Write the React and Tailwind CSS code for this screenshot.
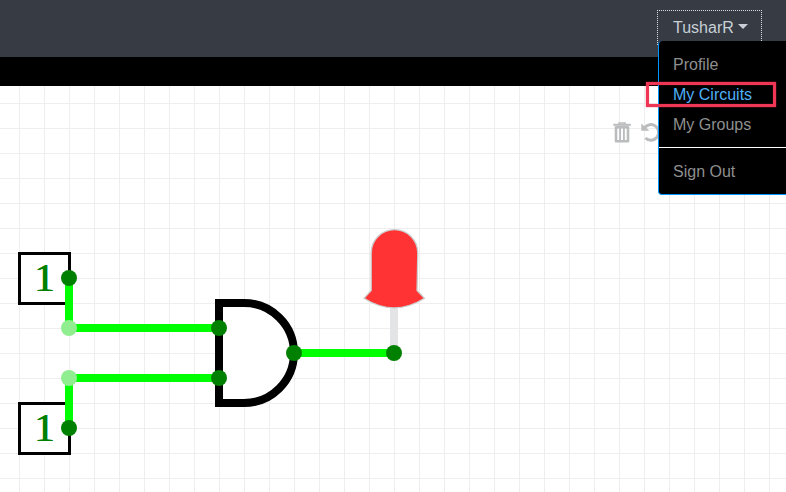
function InputBox({ y }) {
  return (
    <g>
      <rect x="19.5" y={y} width="50" height="50" fill="#fff" stroke="#000" strokeWidth="3" />
      <g fill="#008000" textAnchor="middle" className="font-['Liberation_Serif',serif] text-[41px]">
        <text x="44" y={y + 37.5}>
          1
        </text>
        <text x="45" y={y + 37.5} aria-hidden="true">
          1
        </text>
      </g>
    </g>
  );
}

function TrashIcon() {
  return (
    <svg className="h-[22px] w-[19px]" viewBox="0 0 19 22" fill="none" stroke="currentColor">
      <path d="M.3 2.800H17.800" strokeWidth="2" />
      <path d="M6 2V.9H12V2" strokeWidth="1.500" />
      <path d="M3 5.200V19.200H15V5.200Z" strokeWidth="2.600" strokeLinejoin="round" />
      <path d="M7.100 6V19M10.900 6V19" strokeWidth="1.900" />
    </svg>
  );
}

function UndoIcon() {
  return (
    <svg className="size-[21px]" viewBox="0 0 21 21" fill="none" stroke="currentColor">
      <path d="M3.300 6.200A7.800 7.800 0 1 1 4.400 16" strokeWidth="3" />
      <path d="M.3 1.500V8.700H8.500Z" fill="currentColor" stroke="none" />
    </svg>
  );
}

function Circuit() {
  return (
    <svg className="block h-[406px] w-full" viewBox="0 86 786 406">
      <defs>
        <pattern id="grid" x="19" y="103" width="25" height="25" patternUnits="userSpaceOnUse">
          <path d="M.5 0V25M0 .5H25" stroke="#eeeeee" strokeWidth="1" />
        </pattern>
      </defs>
      <rect y="86" width="786" height="406" fill="url(#grid)" />
      <InputBox y={253.5} />
      <InputBox y={403.5} />
      <path d="M219 303H244A50 50 0 0 1 244 403H219Z" fill="#fff" stroke="#000" strokeWidth="8" />
      <path d="M394 353V303" stroke="#e3e4e5" strokeWidth="8" />
      <path
        d="M371.200 253A23.200 23.200 0 0 1 417.800 253L417 290.500L424.500 298.300Q394 317.500 364 298.300L371.200 290.500Z"
        fill="#ff3333"
        stroke="#cccdce"
        strokeWidth="1.3"
      />
      <path d="M69 278V328H219M69 428V378H219M294 353H394" fill="none" stroke="#00ff00" strokeWidth="8" />
      <g fill="#90ee90">
        <circle cx="69" cy="328" r="8" />
        <circle cx="69" cy="378" r="8" />
      </g>
      <g fill="#008000">
        <circle cx="69" cy="278" r="8" />
        <circle cx="69" cy="428" r="8" />
        <circle cx="219" cy="328" r="8" />
        <circle cx="219" cy="378" r="8" />
        <circle cx="294" cy="353" r="8" />
        <circle cx="394" cy="353" r="8" />
      </g>
    </svg>
  );
}

export default function App() {
  return (
    <div className="relative h-[492px] w-[786px] overflow-hidden bg-white font-['Liberation_Sans',Arial,sans-serif] text-base">
      <header className="flex h-[57px] justify-end bg-[#363b44] pr-6 pt-[10px]">
        <button className="flex h-[35px] w-[105px] items-center border border-dotted border-[#dadddf] pl-[15px] text-[#c8d0d6]">
          TusharR
          <span className="-mt-[3px] ml-1 h-0 w-0 border-x-[5px] border-t-[5px] border-x-transparent border-t-[#c8d0d6]" />
        </button>
      </header>
      <div className="h-[29px] bg-black" />
      <Circuit />
      <div className="absolute left-[613px] top-[122px] flex gap-[9px] text-[#bbbcbd]">
        <TrashIcon />
        <UndoIcon />
      </div>
      <nav className="absolute left-[658px] top-[41px] h-[154px] w-[160px] rounded border border-t-0 border-[#0095ff] bg-black pt-[9px] leading-6 text-[#8f8f8f]">
        <a className="block px-[14px] py-[3px]">Profile</a>
        <a className="block px-[14px] py-[3px] text-[#4fb0f8]">My Circuits</a>
        <a className="block px-[14px] py-[3px]">My Groups</a>
        <hr className="mb-2 mt-[7px] border-white" />
        <a className="block px-[14px] pt-[4px] pb-[3px]">Sign Out</a>
      </nav>
      <div className="absolute left-[646px] top-[82px] h-[25px] w-[130px] border-[3px] border-[#ef3654] shadow-[0_0_1px_#ef3654,inset_0_0_1px_#ef3654]" />
    </div>
  );
}
